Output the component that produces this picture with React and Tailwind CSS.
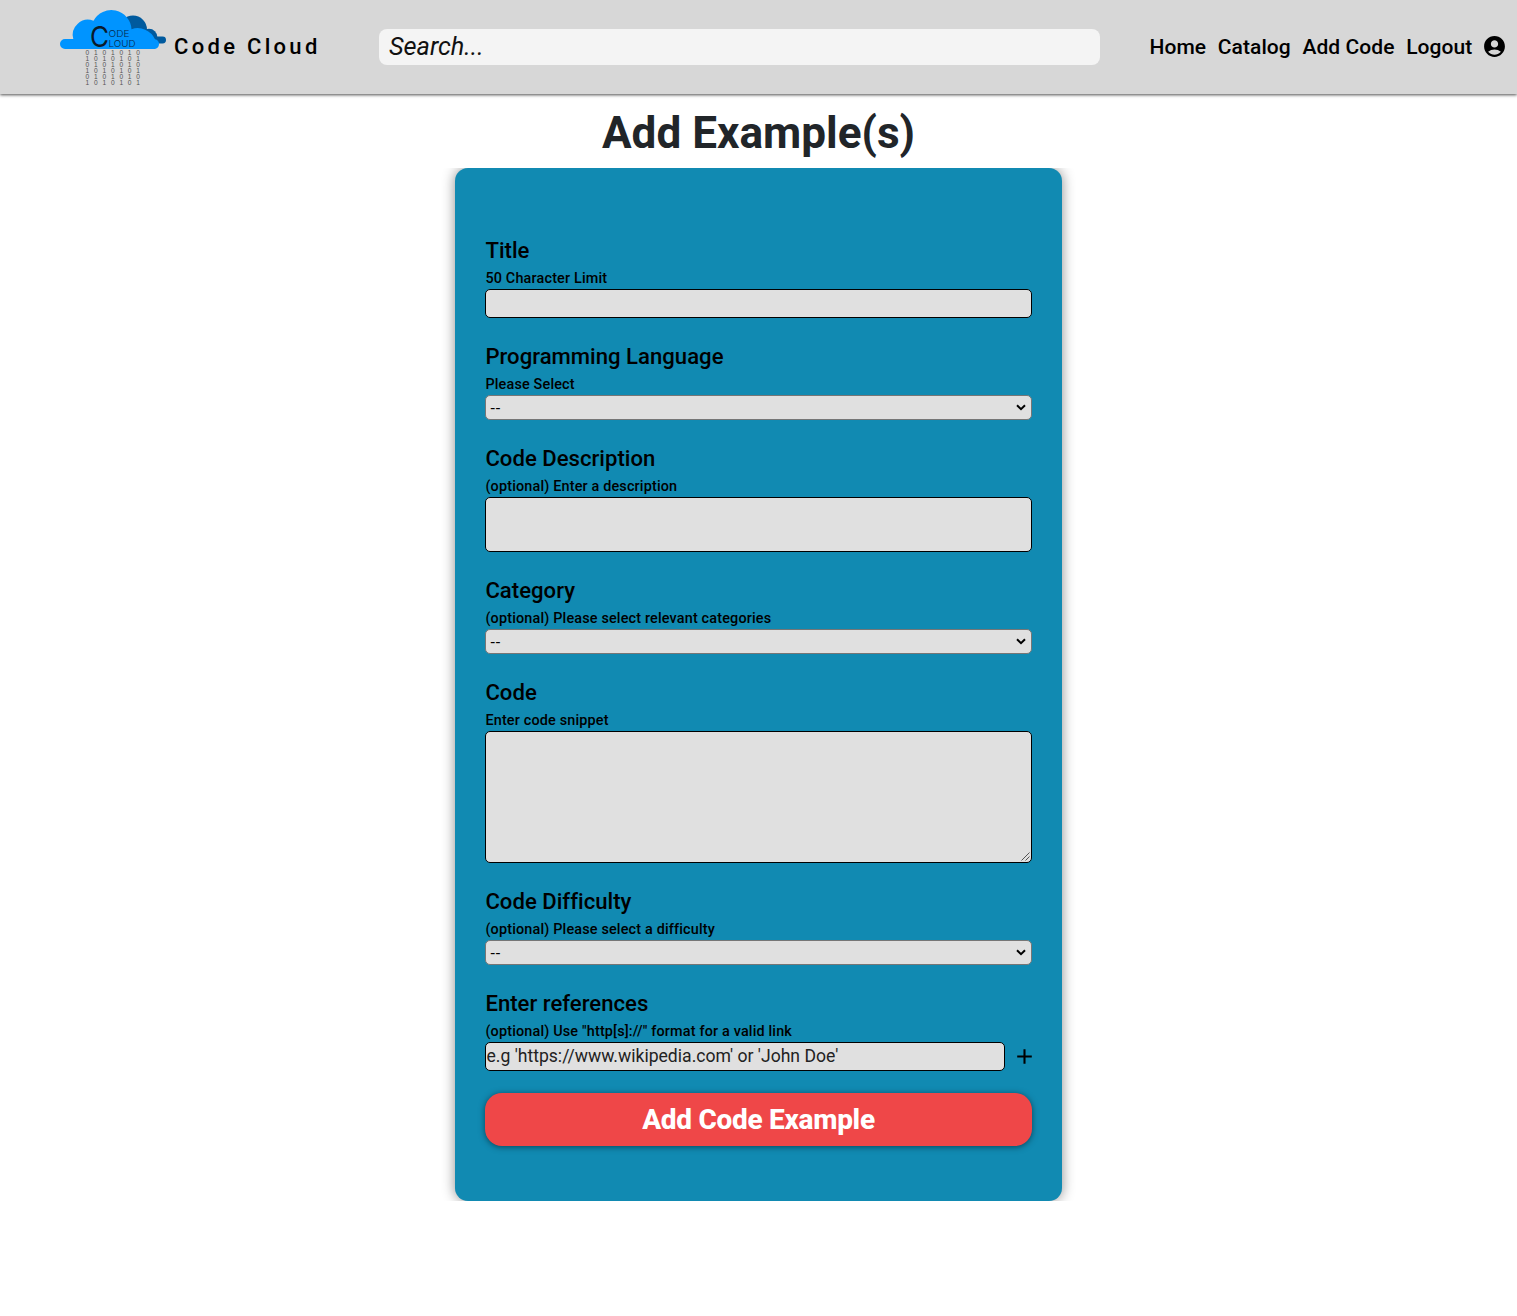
import { MdAccountCircle, MdAdd } from "react-icons/md";

const box = "block w-full rounded-[5px] border border-black bg-[#e0e0e0]";
const rain = ["0101010", "1010101", "0101010", "1010101", "0101010", "1010101"];

function Logo() {
  return (
    <svg className="block h-[80px] w-[108px] shrink-0" viewBox="0 0 108 80">
      <g fill="#005a9e">
        <circle cx="74" cy="22.600" r="14" />
        <circle cx="90" cy="30" r="8.300" />
        <rect x="84" y="29.600" width="23" height="6.800" rx="3.400" />
      </g>
      <path
        fill="#0094ff"
        d="M6 42A5 5 0 0 1 6 32H14.300A15.200 15.200 0 0 1 34.500 13.800A20.200 20.200 0 0 1 72.500 22.200A19 19 0 0 1 96 32.200A5 5 0 0 1 96 42Z"
      />
      <g fill="#06294a" fontFamily="Inter, sans-serif">
        <text x="31" y="39.500" fontSize="28" fontWeight="400" fill="#0a1a2a" textLength="19" lengthAdjust="spacingAndGlyphs">C</text>
        <text x="49.500" y="30.200" fontSize="9.500" fontWeight="300" textLength="21" lengthAdjust="spacingAndGlyphs">ODE</text>
        <text x="49.500" y="39.700" fontSize="9.500" fontWeight="300" textLength="27" lengthAdjust="spacingAndGlyphs">LOUD</text>
      </g>
      <g fill="#555" fontFamily="Liberation Sans, sans-serif" fontSize="6.600">
        {rain.map((row, i) => (
          <text key={i} x="26.500 35 43.500 51.900 60.400 68.800 77.300" y={47.7 + i * 6.05}>{row}</text>
        ))}
      </g>
    </svg>
  );
}

function Field({ title, hint, children }) {
  return (
    <div className="mb-[25px]">
      <h2 className="mb-1 h-[26px] text-[22.1px] leading-[26px] font-medium tracking-[0.02px]">{title}</h2>
      <p className="h-[22px] text-[14.4px] leading-[24px] font-medium tracking-[0.17px]">{hint}</p>
      {children}
    </div>
  );
}

function Select() {
  return (
    <div className="relative">
      <select className="block h-[25px] w-full appearance-none rounded-[5px] border border-[#767676] bg-[#e0e0e0] px-1 pt-[2px] text-[16px] leading-[20px] tracking-[0.8px]">
        <option>--</option>
      </select>
      <svg className="pointer-events-none absolute top-[9px] right-[6px] h-[7px] w-[10px]" viewBox="0 0 10 7" fill="none" stroke="black" strokeWidth="2">
        <path d="M1 1.200L5 5.200L9 1.200" />
      </svg>
    </div>
  );
}

export default function App() {
  return (
    <div className="min-h-[1316px] bg-white font-[Roboto,sans-serif] text-black">
      <header className="flex h-[94px] items-center bg-[#d7d7d7] shadow-[0_1px_3px_rgba(0,0,0,0.7)]">
        <div className="flex w-[379px] shrink-0 items-center pl-[59px]">
          <Logo />
          <span className="mb-[2px] ml-[7px] text-[22px] font-medium tracking-[3.300px]">Code Cloud</span>
        </div>
        <input className="h-[36px] w-[721px] rounded-[8px] bg-[#f4f4f4] px-[10px] text-[25.3px] italic placeholder:text-[#111]" placeholder="Search..." />
        <nav className="ml-auto flex items-center gap-[11.600px] pr-[10px] text-[21px] font-medium tracking-[0.08px]">
          <a className="pt-[1px]">Home</a>
          <a className="pt-[1px]">Catalog</a>
          <a className="pt-[1px]">Add Code</a>
          <a className="pt-[1px]">Logout</a>
          <MdAccountCircle className="mb-[2px] -ml-[2px] size-[25px]" />
        </nav>
      </header>
      <h1 className="mt-[9px] h-[65px] text-center text-[44.1px] leading-[60px] font-bold text-[#212529]">Add Example(s)</h1>
      <div className="overflow-hidden">
        <form className="mx-auto h-[1033px] w-[40%] rounded-[13px] bg-[#118ab2] px-[30.34px] pt-[69px] shadow-[0_0_13px_rgba(0,0,0,0.45)]">
          <Field title="Title" hint="50 Character Limit">
            <input className={`${box} h-[29px]`} />
          </Field>
          <Field title="Programming Language" hint="Please Select">
            <Select />
          </Field>
          <Field title="Code Description" hint="(optional) Enter a description">
            <textarea className={`${box} h-[55px] resize-none`} />
          </Field>
          <Field title="Category" hint="(optional) Please select relevant categories">
            <Select />
          </Field>
          <Field title="Code" hint="Enter code snippet">
            <div className="relative">
              <textarea className={`${box} h-[132px] resize-none`} />
              <svg className="pointer-events-none absolute right-[2px] bottom-[2px] size-[9px]" viewBox="0 0 9 9" stroke="#444" strokeWidth="0.900">
                <path d="M0.500 8.500L8.500 0.500M4.500 8.500L8.500 4.500" />
              </svg>
            </div>
          </Field>
          <Field title="Code Difficulty" hint="(optional) Please select a difficulty">
            <Select />
          </Field>
          <Field title="Enter references" hint={'(optional) Use "http[s]://" format for a valid link'}>
            <div className="flex items-center justify-between">
              <input
                className={`${box} h-[29px] max-w-[520px] pb-[2px] text-[17.600px] placeholder:text-[#222]`}
                placeholder="e.g 'https://www.wikipedia.com' or 'John Doe'"
              />
              <MdAdd className="-mr-[5px] size-[25px]" />
            </div>
          </Field>
          <button className="-mt-[3px] block h-[53px] w-full rounded-[17px] bg-[#ef4748] text-[28px] font-extrabold tracking-[-0.28px] text-white shadow-[0_1px_6px_rgba(0,0,0,0.5)]">
            Add Code Example
          </button>
        </form>
      </div>
    </div>
  );
}
